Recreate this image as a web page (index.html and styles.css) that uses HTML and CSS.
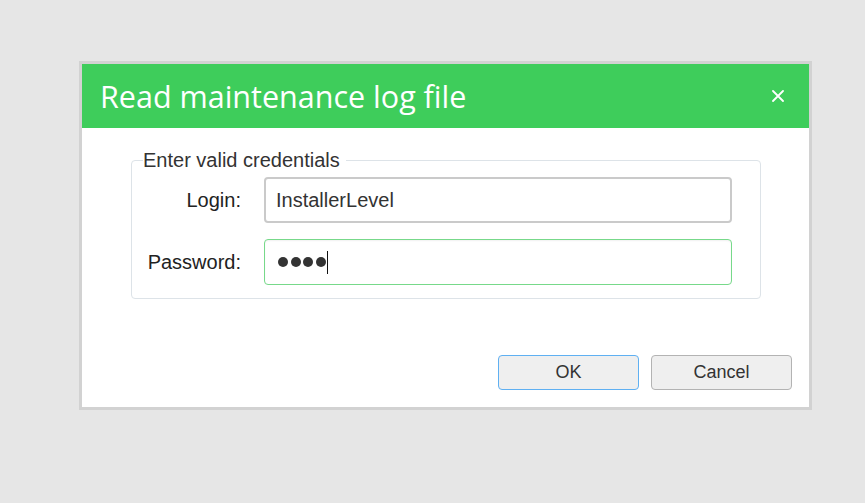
FILE: index.html
```html
<!DOCTYPE html>
<html lang="en">
<head>
  <meta charset="UTF-8" />
  <title>Read maintenance log file</title>
  <link rel="stylesheet" href="styles.css">
</head>
<body>
  <div class="dialog">
    <div class="dialog-header">
      <h1>Read maintenance log file</h1>
      <button class="close" type="button" aria-label="Close">
        <svg width="12" height="12" viewBox="0 0 12 12"><path d="M1 1L11 11M11 1L1 11" stroke="#fff" stroke-width="1.8" stroke-linecap="round"/></svg>
      </button>
    </div>
    <div class="dialog-body">
      <fieldset class="creds">
        <legend>Enter valid credentials</legend>
        <div class="form-grid">
          <label for="login">Login:</label>
          <input type="text" id="login" class="field" value="InstallerLevel">
          <label for="password">Password:</label>
          <div class="field active" id="password">
            <span class="dot"></span><span class="dot"></span><span class="dot"></span><span class="dot"></span>
            <span class="caret"></span>
          </div>
        </div>
      </fieldset>
      <div class="actions">
        <button class="btn primary" type="button">OK</button>
        <button class="btn" type="button">Cancel</button>
      </div>
    </div>
  </div>
</body>
</html>
```

FILE: styles.css
```css
* { box-sizing: border-box; }

body {
  margin: 0;
  padding: 61px 0 0 79px;
  background: #e6e6e6;
  font-family: 'Liberation Sans', Arial, sans-serif;
  color: #333;
  min-height: 100vh;
}

.dialog {
  width: 733px;
  height: 349px;
  background: #fff;
  border: 3px solid #d2d2d2;
}

.dialog-header {
  height: 64px;
  background: #3ecd5b;
  display: flex;
  align-items: center;
  justify-content: space-between;
  padding: 0 25px 0 18px;
}

.dialog-header h1 {
  margin: 0;
  font-family: 'Open Sans', sans-serif;
  font-weight: 400;
  font-size: 30.5px;
  color: #fff;
}

.close {
  background: none;
  border: none;
  padding: 0;
  display: flex;
  cursor: pointer;
}

.dialog-body {
  padding: 21px 17px 0 49px;
}

.creds {
  margin: 0;
  width: 630px;
  border: 1px solid #dde3e8;
  border-radius: 4px;
  padding: 5px 28px 13px 13px;
}

.creds legend {
  font-size: 20px;
  padding: 0 6px 0 0;
  margin-left: -2px;
  color: #333;
}

.form-grid {
  display: grid;
  grid-template-columns: 96px 468px;
  column-gap: 23px;
  row-gap: 16px;
  align-items: center;
}

label {
  text-align: right;
  font-size: 20px;
  color: #222;
}

.field {
  height: 46px;
  border: 2px solid #cacaca;
  border-radius: 4px;
  padding: 0 10px;
  font-family: 'Liberation Sans', Arial, sans-serif;
  font-size: 20px;
  color: #333;
  outline: none;
}

.field.active {
  border: 1.5px solid #77d98a;
  display: flex;
  align-items: center;
  gap: 2.5px;
  padding-left: 13px;
  box-shadow: inset 0 1px 2px rgba(0, 0, 0, 0.06);
}

.dot {
  width: 10px;
  height: 10px;
  border-radius: 50%;
  background: #333;
}

.caret {
  width: 1px;
  height: 23px;
  background: #111;
  margin-left: -1px;
}

.actions {
  display: flex;
  justify-content: flex-end;
  gap: 12px;
  margin-top: 56px;
}

.btn {
  width: 141px;
  height: 35px;
  background: #efefef;
  border: 1px solid #b3b3b3;
  border-radius: 4px;
  font-family: 'Liberation Sans', Arial, sans-serif;
  font-size: 18px;
  color: #333;
}

.btn.primary {
  border-color: #5fb0f2;
}
```
